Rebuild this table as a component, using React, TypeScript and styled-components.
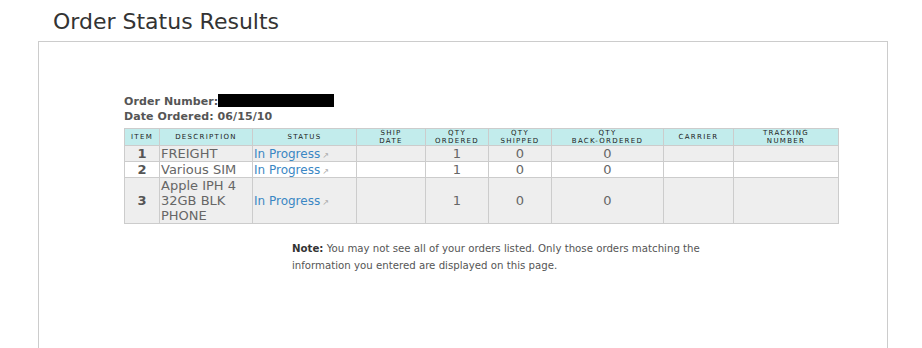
import React from 'react';
import styled, { createGlobalStyle } from 'styled-components';

const GlobalStyle = createGlobalStyle`
  body {
    margin: 0;
    background: #ffffff;
    font-family: "DejaVu Sans", Verdana, sans-serif;
    color: #555555;
  }
`;

const Page = styled.div`
  width: 922px;
  height: 348px;
  overflow: hidden;
`;

const Title = styled.h1`
  margin: 0;
  padding: 9px 0 0 53px;
  height: 32px;
  font-size: 22px;
  font-weight: normal;
  line-height: 26px;
  color: #333333;
`;

const Panel = styled.div`
  margin-left: 38px;
  width: 850px;
  height: 400px;
  border: 1px solid #cccccc;
  padding: 52px 0 0 85px;
  box-sizing: border-box;
`;

const OrderInfo = styled.div`
  font-size: 11px;
  font-weight: bold;
  line-height: 15px;
  letter-spacing: 0.1px;
  color: #555555;
  margin-bottom: 4px;
`;

const Redacted = styled.span`
  display: inline-block;
  width: 116px;
  height: 13px;
  background: #000000;
  vertical-align: -2px;
`;

const Table = styled.table`
  width: 714px;
  table-layout: fixed;
  border-collapse: collapse;
  border: 1px solid #cccccc;
`;

const HeadCell = styled.th`
  background: #c2ecec;
  border: 1px solid #cccccc;
  height: 16px;
  padding: 0 1px;
  font-family: "DejaVu Sans", sans-serif;
  font-size: 7px;
  font-weight: normal;
  letter-spacing: 1.3px;
  line-height: 8px;
  color: #1a1a1a;
  text-align: center;
  vertical-align: middle;
`;

const Row = styled.tr<{ $alt?: boolean }>`
  background: ${(p) => (p.$alt ? '#ffffff' : '#eeeeee')};
`;

const Cell = styled.td<{ $align?: 'left' | 'center'; $bold?: boolean }>`
  border: 1px solid #cccccc;
  height: 15px;
  padding: 0 1px;
  font-size: 13px;
  line-height: 15px;
  color: ${(p) => (p.$bold ? '#555555' : '#666666')};
  font-weight: ${(p) => (p.$bold ? 'bold' : 'normal')};
  text-align: ${(p) => p.$align ?? 'left'};
  vertical-align: middle;
`;

// link plus the small "opens elsewhere" arrow
const Status = styled.div`
  display: flex;
  align-items: baseline;
  height: 15px;
  padding-top: 1px;
  box-sizing: border-box;
`;

const StatusLink = styled.a`
  color: #3a87c4;
  font-size: 12px;
  line-height: 14px;
  text-decoration: none;
`;

const ExtArrow = styled.span`
  color: #aaaaaa;
  font-size: 8px;
  line-height: 14px;
  margin-left: 2px;
`;

const Note = styled.p`
  margin: 16px 0 0 168px;
  width: 430px;
  font-size: 10.2px;
  line-height: 17px;
  color: #555555;

  b {
    color: #333333;
  }
`;

const columns: { label: React.ReactNode; width: number }[] = [
  { label: 'ITEM', width: 35 },
  { label: 'DESCRIPTION', width: 93 },
  { label: 'STATUS', width: 104 },
  { label: <>SHIP<br />DATE</>, width: 69 },
  { label: <>QTY<br />ORDERED</>, width: 63 },
  { label: <>QTY<br />SHIPPED</>, width: 63 },
  { label: <>QTY<br />BACK-ORDERED</>, width: 112 },
  { label: 'CARRIER', width: 70 },
  { label: <>TRACKING<br />NUMBER</>, width: 105 },
];

const orders = [
  { item: 1, description: 'FREIGHT', ordered: 1, shipped: 0, back: 0 },
  { item: 2, description: 'Various SIM', ordered: 1, shipped: 0, back: 0 },
  { item: 3, description: 'Apple IPH 4 32GB BLK PHONE', ordered: 1, shipped: 0, back: 0 },
];

export default function App() {
  return (
    <Page>
      <GlobalStyle />
      <Title>Order Status Results</Title>
      <Panel>
        <OrderInfo>
          Order Number:<Redacted />
          <br />
          Date Ordered: 06/15/10
        </OrderInfo>
        <Table>
          <colgroup>
            {columns.map((c, i) => (
              <col key={i} style={{ width: c.width }} />
            ))}
          </colgroup>
          <thead>
            <tr>
              {columns.map((c, i) => (
                <HeadCell key={i}>{c.label}</HeadCell>
              ))}
            </tr>
          </thead>
          <tbody>
            {orders.map((o, i) => (
              <Row key={o.item} $alt={i % 2 === 1}>
                <Cell $align="center" $bold>{o.item}</Cell>
                <Cell>{o.description}</Cell>
                <Cell>
                  <Status>
                    <StatusLink href="#">In Progress</StatusLink>
                    <ExtArrow>↗</ExtArrow>
                  </Status>
                </Cell>
                <Cell />
                <Cell $align="center">{o.ordered}</Cell>
                <Cell $align="center">{o.shipped}</Cell>
                <Cell $align="center">{o.back}</Cell>
                <Cell />
                <Cell />
              </Row>
            ))}
          </tbody>
        </Table>
        <Note>
          <b>Note:</b> You may not see all of your orders listed. Only those orders matching the
          information you entered are displayed on this page.
        </Note>
      </Panel>
    </Page>
  );
}
